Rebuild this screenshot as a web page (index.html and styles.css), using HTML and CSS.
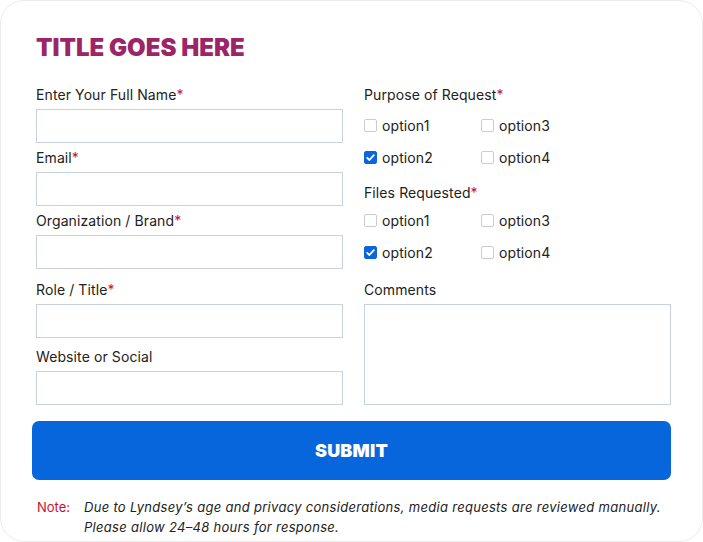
FILE: index.html
```html
<!DOCTYPE html>
<html>
<head>
<meta charset="utf-8">
<link rel="stylesheet" href="styles.css">
</head>
<body>
<form class="card">
  <h1 class="title">TITLE GOES HERE</h1>
  <div class="grid">
    <div class="col">
      <div class="field">
        <label class="label">Enter Your Full Name<span class="req">*</span></label>
        <div class="input"></div>
      </div>
      <div class="field">
        <label class="label">Email<span class="req">*</span></label>
        <div class="input"></div>
      </div>
      <div class="field">
        <label class="label">Organization / Brand<span class="req">*</span></label>
        <div class="input"></div>
      </div>
    </div>
    <div class="col">
      <div class="group">
        <label class="label">Purpose of Request<span class="req">*</span></label>
        <div class="options">
          <span class="opt"><span class="box"></span>option1</span>
          <span class="opt"><span class="box"></span>option3</span>
          <span class="opt"><span class="box checked"><svg viewBox="0 0 13 13" width="13" height="13"><path d="M3.2 6.8 L5.4 9 L9.8 4.2" fill="none" stroke="#fff" stroke-width="1.8" stroke-linecap="round" stroke-linejoin="round"/></svg></span>option2</span>
          <span class="opt"><span class="box"></span>option4</span>
        </div>
      </div>
      <div class="group">
        <label class="label files">Files Requested<span class="req">*</span></label>
        <div class="options">
          <span class="opt"><span class="box"></span>option1</span>
          <span class="opt"><span class="box"></span>option3</span>
          <span class="opt"><span class="box checked"><svg viewBox="0 0 13 13" width="13" height="13"><path d="M3.2 6.8 L5.4 9 L9.8 4.2" fill="none" stroke="#fff" stroke-width="1.8" stroke-linecap="round" stroke-linejoin="round"/></svg></span>option2</span>
          <span class="opt"><span class="box"></span>option4</span>
        </div>
      </div>
    </div>
    <div class="col spread">
      <div class="field">
        <label class="label">Role / Title<span class="req">*</span></label>
        <div class="input"></div>
      </div>
      <div class="field">
        <label class="label">Website or Social</label>
        <div class="input"></div>
      </div>
    </div>
    <div class="col">
      <div class="field">
        <label class="label">Comments</label>
        <div class="textarea"></div>
      </div>
    </div>
  </div>
  <button class="submit" type="button">SUBMIT</button>
  <p class="note"><span class="note-key">Note:</span><span class="note-text">Due to Lyndsey’s age and privacy considerations, media requests are reviewed manually. Please allow 24–48 hours for response.</span></p>
</form>
</body>
</html>
```
FILE: styles.css
```css
* { box-sizing: border-box; }
html, body { margin: 0; padding: 0; background: #fff; }
body { font-family: "Inter", "Open Sans", sans-serif; color: #222; }

.card {
  width: 703px;
  height: 542px;
  border: 1px solid #ececec;
  border-radius: 24px;
  padding: 30px 32px 0 35px;
  display: flex;
  flex-direction: column;
}

.title {
  margin: 0;
  font-family: "Inter", sans-serif;
  font-weight: 900;
  font-size: 24px;
  line-height: 34px;
  color: #9b2566;
  letter-spacing: 0;
}

.grid {
  margin-top: 20px;
  display: grid;
  grid-template-columns: 307px 307px;
  column-gap: 21px;
  row-gap: 10px;
}

.col { display: flex; flex-direction: column; gap: 5px; }
.col.spread { justify-content: space-between; gap: 0; }

.field { display: flex; flex-direction: column; }

.label {
  font-size: 14px;
  line-height: 20px;
  margin: 0 0 4px 0;
  color: #222;
  letter-spacing: 0.1px;
}
.req { color: #c8102e; }

.input {
  height: 34px;
  border: 1px solid #c8d1de;
  background: #fff;
}
.textarea {
  height: 101px;
  border: 1px solid #c8d1de;
  background: #fff;
}

.group { display: flex; flex-direction: column; margin-bottom: 2px; }
.group .label { margin-bottom: 0; }
.group .label.files { margin-top: 3px; margin-bottom: -3px; }

.options {
  display: grid;
  grid-template-columns: 117px 117px;
  grid-auto-rows: 32px;
  margin-top: 4px;
}
.opt {
  display: flex;
  align-items: center;
  font-size: 14px;
  color: #222;
  letter-spacing: 0.1px;
}
.box {
  width: 13px;
  height: 13px;
  border: 1px solid #c9ccd1;
  border-radius: 2px;
  margin-right: 5px;
  flex: none;
  display: flex;
}
.box.checked { background: #0b66dd; border-color: #0b66dd; }
.box svg { display: block; margin: -1px; }

.submit {
  margin: 16px 0 0 -4px;
  width: 639px;
  height: 59px;
  border: none;
  border-radius: 7px;
  background: #0866dc;
  color: #fff;
  font-family: "Inter", sans-serif;
  font-weight: 900;
  font-size: 18px;
  letter-spacing: 0.2px;
}

.note {
  margin: 17px 0 0 1px;
  display: flex;
  font-size: 13px;
  line-height: 20px;
}
.note-key { color: #c8102e; width: 47px; flex: none; }
.note-text { font-style: italic; color: #222; width: 590px; letter-spacing: 0.3px; }
```
